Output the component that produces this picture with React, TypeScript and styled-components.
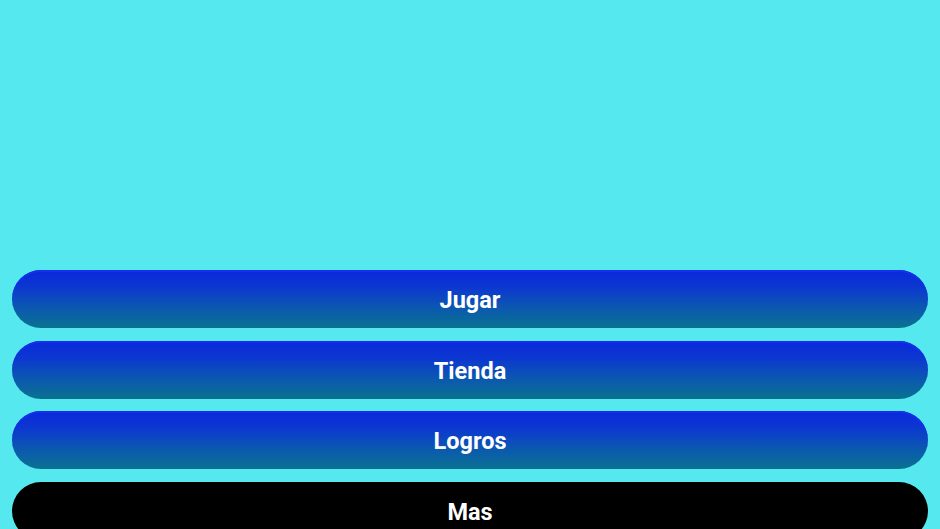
import styled, {createGlobalStyle} from "styled-components";

const GlobalStyle = createGlobalStyle`
  html, body {
    margin: 0;
    padding: 0;
    background: #56e8ef;
    font-family: Roboto, "Liberation Sans", sans-serif;
  }
`;

const Screen = styled.div`
  width: 940px;
  height: 529px;
  overflow: hidden;
  display: flex;
  flex-direction: column;
  background: #56e8ef;
`;

const Header = styled.div`
  height: 270px;
  flex-shrink: 0;
`;

const Menu = styled.nav`
  display: flex;
  flex-direction: column;
  gap: 12.5px;
  padding: 0 12px;
`;

const MenuButton = styled.button<{$dark?: boolean}>`
  height: 58px;
  flex-shrink: 0;
  border: none;
  border-radius: 29px;
  padding: 2px 0 0;
  background: ${p => p.$dark ? '#000' : 'linear-gradient(#0a28dc 0%, #0c38d0 30%, #0b58b0 65%, #0a7290 100%)'};
  box-shadow: ${p => p.$dark ? 'none' : 'inset 0 2px 0 #1430ec'};
  color: #fff;
  font-family: Roboto, "Liberation Sans", sans-serif;
  font-weight: 700;
  font-size: 23.5px;
  cursor: pointer;
`;

const items = ['Jugar', 'Tienda', 'Logros'];

export default function App() {
  return <Screen>
    <GlobalStyle />
    <Header />
    <Menu>
      {items.map(label => <MenuButton key={label}>{label}</MenuButton>)}
      <MenuButton $dark>Mas</MenuButton>
    </Menu>
  </Screen>;
}
